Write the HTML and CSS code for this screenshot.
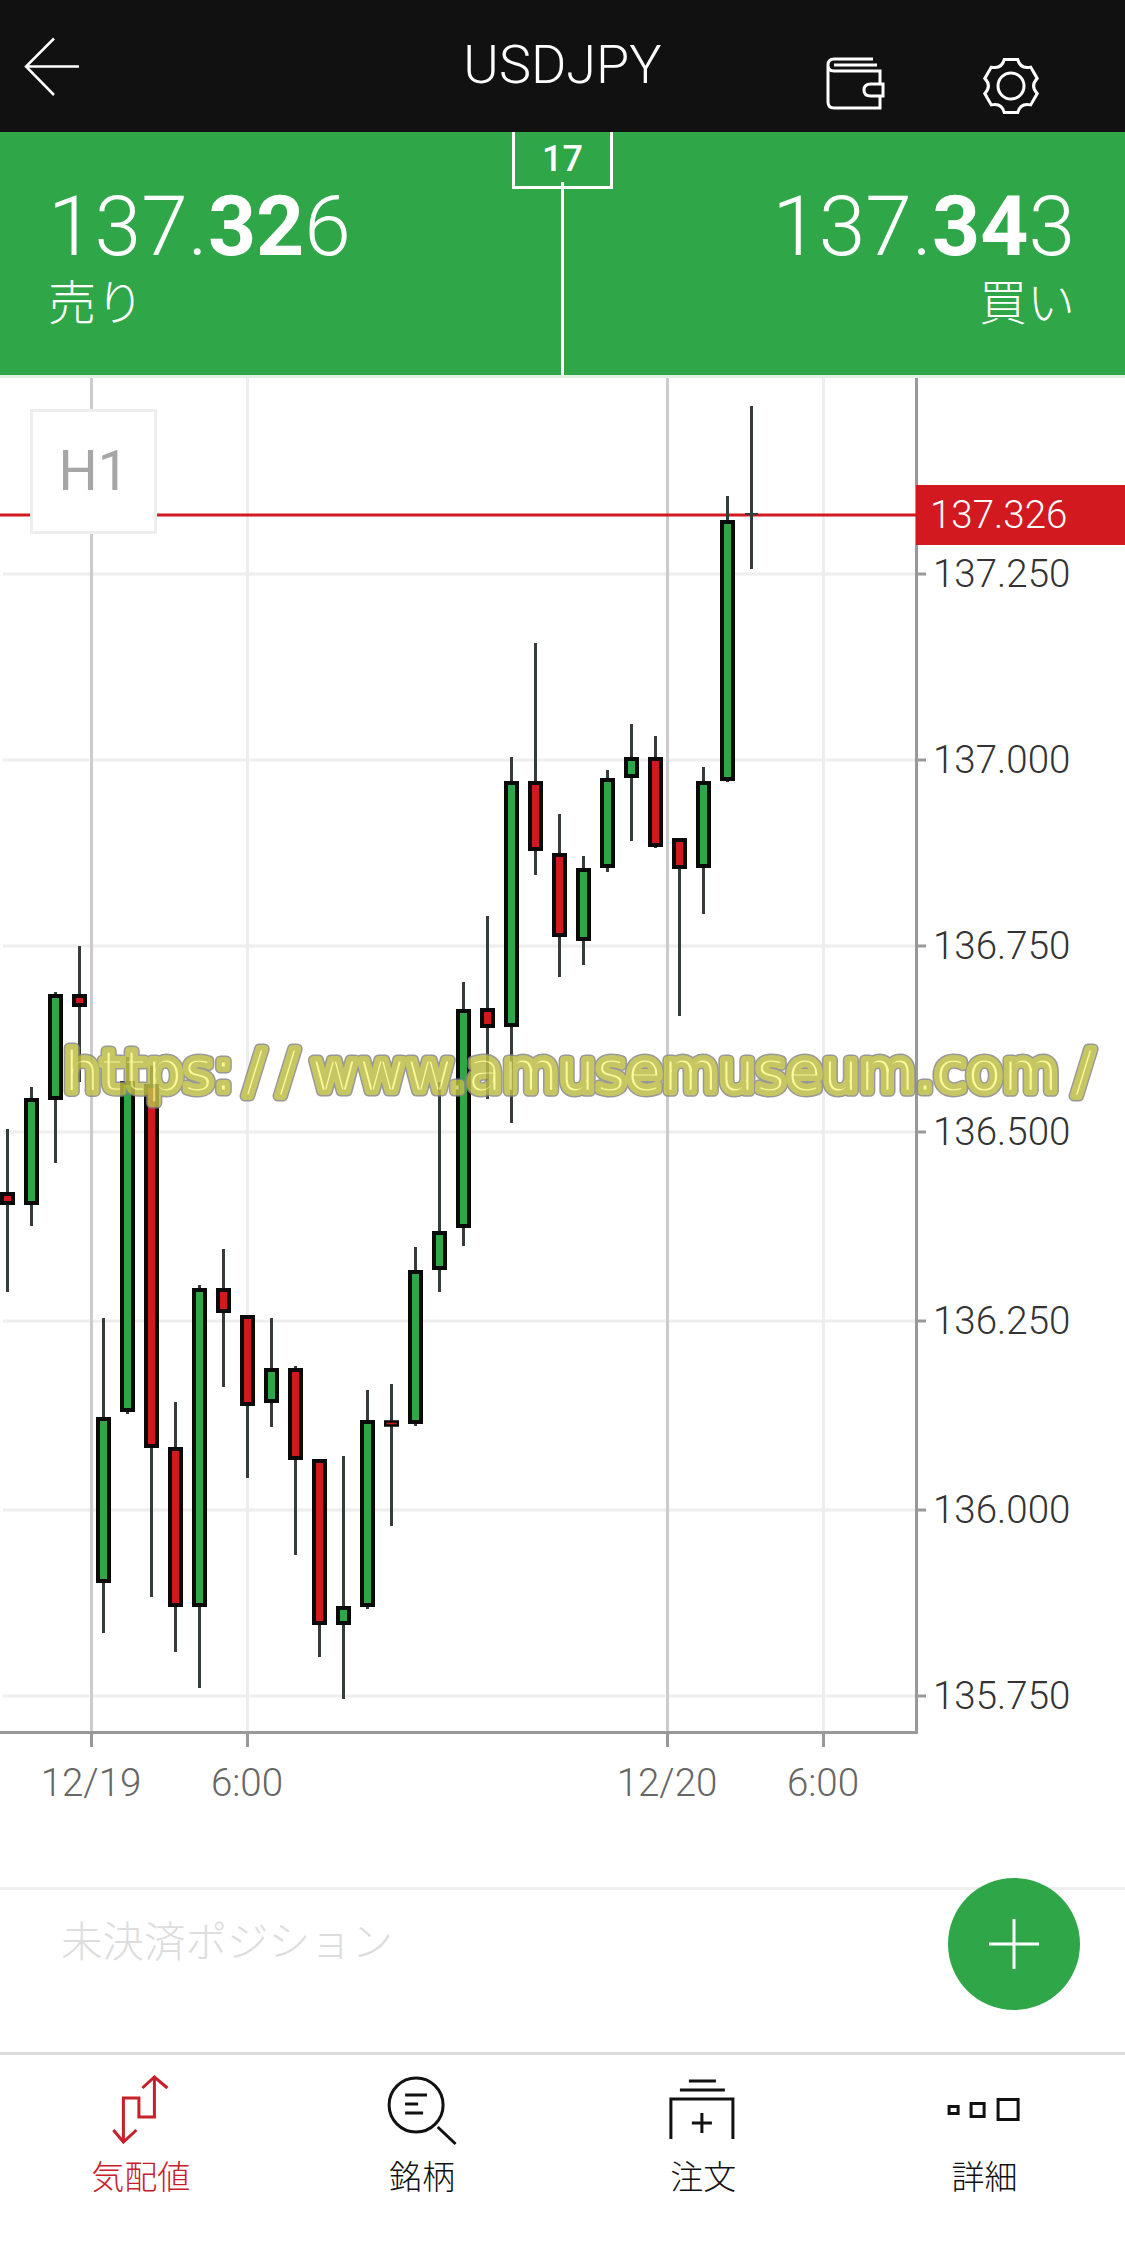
FILE: index.html
```html
<!DOCTYPE html>
<html lang="ja">
  <head>
    <meta charset="UTF-8" />
    <meta name="viewport" content="width=device-width, initial-scale=1" />
    <title>USDJPY</title>
    <link rel="stylesheet" href="styles.css">
  </head>
  <body>
    <header class="topbar">
      <a href="#" class="back" aria-label="back">
        <svg class="icon-back" viewBox="0 0 60 62">
          <path d="M33 1.5 5 29.5 33 58M5 29.5H58" />
        </svg>
      </a>
      <div class="title">USDJPY</div>
      <div class="actions">
        <svg class="icon-wallet" viewBox="0 0 62 56">
          <path d="M49 4H10Q4 4 4 10V47Q4 53 10 53H56V41M56 29V16H10Q4 16 4 10M10 10H53M59 29H46.7Q40 29 40 35T46.7 41H59Z" />
        </svg>
        <svg class="icon-gear" viewBox="-30 -30 60 60">
          <path d="M-6.7-26.5H6.7Q9.5-16.5 19.7-18.9L26.2-7.6Q19 0 26.2 7.6L19.7 18.9Q9.5 16.5 6.7 26.5H-6.7Q-9.5 16.5-19.7 18.9L-26.2 7.6Q-19 0-26.2-7.6L-19.7-18.9Q-9.5-16.5-6.7-26.5Z" />
          <circle cx="0" cy="0" r="13" />
        </svg>
      </div>
    </header>

    <section class="quote">
      <div class="side">
        <div class="price">137.<b>32</b>6</div>
        <div class="side-label">売り</div>
      </div>
      <div class="side side-buy">
        <div class="price">137.<b>34</b>3</div>
        <div class="side-label">買い</div>
      </div>
      <div class="spread">17</div>
    </section>

    <section class="chart">
      <svg class="plot" viewBox="0 378 1125 1509">
        <defs>
          <text id="watermark-text" class="watermark-text" y="1090.5"><tspan x="64" class="watermark-scheme">https:</tspan><tspan x="245">/</tspan><tspan x="278">/</tspan><tspan x="311" class="watermark-host">www.amusemuseum.com</tspan><tspan x="1074">/</tspan></text>
        </defs>

        <path class="grid" d="M3 574H916M3 760H916M3 946H916M3 1132H916M3 1321H916M3 1510H916M3 1696H916M247.5 378V1732M823.5 378V1732" />
        <path class="grid-day" d="M91.5 378V1732M667.5 378V1732" />
        <path class="axis" d="M916.5 378V1732.5H0M916 574H926M916 760H926M916 946H926M916 1132H926M916 1321H926M916 1510H926M916 1696H926M91.5 1732V1747M247.5 1732V1747M667.5 1732V1747M823.5 1732V1747" />
        <path class="last-line" d="M0 515H916" />

        <path class="wick" d="M7.5 1129V1292M31.5 1087V1226M55.5 992V1163M79.5 946V1082M103.5 1318V1633M127.5 1057V1414M151.5 1066V1597M175.5 1402V1652M199.5 1285V1688M223.5 1249V1387M247.5 1315V1478M271.5 1318V1427M295.5 1366V1555M319.5 1459V1657M343.5 1456V1699M367.5 1390V1609M391.5 1384V1526M415.5 1247V1426M439.5 1082V1292M463.5 982V1246M487.5 916V1099M511.5 757V1123M535.5 643V875M559.5 814V977M583.5 856V965M607.5 770V872M631.5 724V841M655.5 736V848M679.5 838V1016M703.5 767V914M727.5 496V782M751.5 406V569" />
        <path class="doji" d="M745 514H758" />

        <rect class="down" x="2" y="1194" width="11" height="9" />
        <rect class="up" x="26" y="1100" width="11" height="103" />
        <rect class="up" x="50" y="996" width="11" height="102" />
        <rect class="down" x="74" y="996" width="11" height="9" />
        <rect class="up" x="98" y="1419" width="11" height="162" />
        <rect class="up" x="122" y="1083" width="11" height="327" />
        <rect class="down" x="146" y="1086" width="11" height="360" />
        <rect class="down" x="170" y="1449" width="11" height="156" />
        <rect class="up" x="194" y="1290" width="11" height="315" />
        <rect class="down" x="218" y="1290" width="11" height="21" />
        <rect class="down" x="242" y="1317" width="11" height="87" />
        <rect class="up" x="266" y="1370" width="11" height="31" />
        <rect class="down" x="290" y="1370" width="11" height="88" />
        <rect class="down" x="314" y="1461" width="11" height="162" />
        <rect class="up" x="338" y="1608" width="11" height="15" />
        <rect class="up" x="362" y="1422" width="11" height="183" />
        <rect class="down thin" x="385.25" y="1421.5" width="12.5" height="4" />
        <rect class="up" x="410" y="1272" width="11" height="150" />
        <rect class="up" x="434" y="1233" width="11" height="35" />
        <rect class="up" x="458" y="1011" width="11" height="215" />
        <rect class="down" x="482" y="1010" width="11" height="16" />
        <rect class="up" x="506" y="783" width="11" height="242" />
        <rect class="down" x="530" y="783" width="11" height="66" />
        <rect class="down" x="554" y="855" width="11" height="80" />
        <rect class="up" x="578" y="870" width="11" height="69" />
        <rect class="up" x="602" y="780" width="11" height="86" />
        <rect class="up" x="626" y="759" width="11" height="17" />
        <rect class="down" x="650" y="759" width="11" height="86" />
        <rect class="down" x="674" y="840" width="11" height="27" />
        <rect class="up" x="698" y="783" width="11" height="83" />
        <rect class="up" x="722" y="522" width="11" height="257" />

        <rect class="last-tag" x="916" y="485" width="209" height="60" />
        <text class="last-price" x="930" y="528">137.326</text>

        <text class="price-label" x="933" y="587">137.250</text>
        <text class="price-label" x="933" y="773">137.000</text>
        <text class="price-label" x="933" y="959">136.750</text>
        <text class="price-label" x="933" y="1145">136.500</text>
        <text class="price-label" x="933" y="1334">136.250</text>
        <text class="price-label" x="933" y="1523">136.000</text>
        <text class="price-label" x="933" y="1709">135.750</text>

        <text class="time-label" x="91" y="1796">12/19</text>
        <text class="time-label" x="247" y="1796">6:00</text>
        <text class="time-label" x="667" y="1796">12/20</text>
        <text class="time-label" x="823" y="1796">6:00</text>

        <g class="watermark">
          <use class="watermark-rim" href="#watermark-text" />
          <use class="watermark-mid" href="#watermark-text" />
          <use class="watermark-core" href="#watermark-text" />
        </g>
      </svg>

      <div class="timeframe">H1</div>
    </section>

    <section class="positions">
      <div class="positions-empty">未決済ポジション</div>
      <button class="fab" aria-label="add">
        <svg viewBox="0 0 52 52"><path d="M26 1V51M1 26H51" /></svg>
      </button>
    </section>

    <nav class="tabs">
      <a href="#" class="tab tab-active">
        <svg class="tab-icon" viewBox="0 0 90 72">
          <path d="M46.4 13 58.4 2 71.4 13M58.4 2V42H42.9V23H27.4V67M17.4 55 27.4 67 40.4 55" />
        </svg>
        <span>気配値</span>
      </a>
      <a href="#" class="tab">
        <svg class="tab-icon" viewBox="0 0 90 72">
          <circle cx="39.1" cy="30" r="27" />
          <path d="M60.7 52 78.6 69M28.1 20H50M28.1 29H41.1M28.1 38H46.1" />
        </svg>
        <span>銘柄</span>
      </a>
      <a href="#" class="tab">
        <svg class="tab-icon" viewBox="0 0 90 72">
          <path d="M30.9 6H57.9M21.9 15H66.9M12.9 64V24H74.9V64M33.9 48H53.9M43.9 38V58" />
        </svg>
        <span>注文</span>
      </a>
      <a href="#" class="tab">
        <svg class="tab-icon" viewBox="0 0 90 72">
          <rect x="10.1" y="31.5" width="9" height="7" />
          <rect x="32.1" y="28.5" width="13" height="13" />
          <rect x="59.1" y="24.5" width="20" height="20" />
        </svg>
        <span>詳細</span>
      </a>
    </nav>
  </body>
</html>
```

FILE: styles.css
```css
* {
  box-sizing: border-box;
}

html,
body {
  background-color: #fff;
  color: #111;
  font-family: Roboto, "Noto Sans CJK JP", sans-serif;
  height: 100%;
  margin: 0;
  overflow: hidden;
}

body {
  display: flex;
  flex-direction: column;
}

svg {
  display: block;
  fill: none;
}

a {
  color: inherit;
  text-decoration: none;
}

/* top bar */

.topbar {
  background-color: #111;
  color: #fff;
  display: grid;
  flex: none;
  grid-template-columns: 1fr auto 1fr;
  height: 132px;
}

.back {
  padding: 37px 0 0 21px;
}

.icon-back {
  height: 62px;
  stroke: #fff;
  stroke-width: 2.5;
  width: 60px;
}

.title {
  font-size: 54px;
  font-weight: 300;
  line-height: 130px;
}

.actions {
  display: flex;
  gap: 95px;
  justify-content: flex-end;
  padding: 55px 84px 0 0;
}

.icon-wallet {
  height: 56px;
  stroke: #fff;
  stroke-width: 3;
  width: 62px;
}

.icon-gear {
  height: 60px;
  margin-top: 1px;
  stroke: #fff;
  stroke-width: 3;
  width: 60px;
}

/* bid and ask */

.quote {
  background-color: #2fa648;
  border-bottom: 3px solid #dff0e3;
  color: #fff;
  display: flex;
  flex: none;
  height: 246px;
  justify-content: space-between;
  position: relative;
}

.quote::after {
  background-color: #fff;
  bottom: 0;
  content: "";
  left: 561px;
  position: absolute;
  top: 50px;
  width: 3px;
}

.side {
  padding: 53px 0 0 48px;
}

.side-buy {
  padding: 53px 50px 0 0;
  text-align: right;
}

.price {
  font-size: 84px;
  font-weight: 300;
  line-height: 84px;
}

.price b {
  font-weight: 700;
}

.side-label {
  font-size: 48px;
  font-weight: 300;
  line-height: 46px;
  margin-top: 12px;
}

.spread {
  border: 3px solid #fff;
  border-top: none;
  font-size: 36px;
  font-weight: 500;
  height: 57px;
  left: 512px;
  line-height: 54px;
  position: absolute;
  text-align: center;
  top: 0;
  width: 101px;
}

/* chart */

.chart {
  flex: none;
  height: 1509px;
  position: relative;
}

.plot {
  height: 1509px;
  width: 1125px;
}

.grid {
  stroke: #eee;
  stroke-width: 3;
}

.grid-day {
  stroke: #ccc;
  stroke-width: 3;
}

.axis {
  stroke: #999;
  stroke-width: 3;
}

.last-line {
  stroke: #d31920;
  stroke-width: 3;
}

.wick {
  stroke: #343c3c;
  stroke-width: 3;
}

.doji {
  stroke: #343c3c;
  stroke-width: 2;
}

.up,
.down {
  stroke: #0a0a0a;
  stroke-width: 4;
}

.down.thin {
  stroke-width: 2.5;
}

.up {
  fill: #2fa648;
}

.down {
  fill: #d31920;
}

.last-tag {
  fill: #d31920;
}

.last-price {
  fill: #fff;
  font-size: 38.5px;
  font-weight: 300;
}

.price-label {
  fill: #333;
  font-size: 38.5px;
  font-weight: 300;
}

.time-label {
  fill: #666;
  font-size: 38.5px;
  font-weight: 300;
  text-anchor: middle;
}

.timeframe {
  background-color: #fff;
  border: 3px solid #eee;
  color: #a6a6a6;
  font-size: 55px;
  height: 125px;
  left: 30px;
  line-height: 119px;
  position: absolute;
  text-align: center;
  top: 31px;
  width: 127px;
}

.watermark {
  opacity: 0.85;
}

.watermark-text {
  font-family: "DejaVu Sans", sans-serif;
  font-size: 57px;
}

.watermark-scheme {
  letter-spacing: 0.6px;
}

.watermark-host {
  letter-spacing: 0.85px;
}

.watermark-rim,
.watermark-mid {
  fill: none;
  stroke-linejoin: round;
}

.watermark-rim {
  stroke: #878787;
  stroke-width: 11;
}

.watermark-mid {
  stroke: #bdbd48;
  stroke-width: 8;
}

.watermark-core {
  fill: #f8f888;
  stroke: #bdbd48;
  stroke-width: 3;
}

/* open positions */

.positions {
  border-top: 3px solid #eee;
  flex: none;
  height: 165px;
  padding: 23px 0 0 61px;
  position: relative;
}

.positions-empty {
  color: #ddd;
  font-size: 41.5px;
  font-weight: 300;
  line-height: 60px;
}

.fab {
  background-color: #2fa648;
  border: none;
  border-radius: 50%;
  height: 132px;
  left: 948px;
  padding: 40px;
  position: absolute;
  top: -12px;
  width: 132px;
}

.fab svg {
  height: 52px;
  stroke: #fff;
  stroke-width: 3;
  width: 52px;
}

/* bottom tabs */

.tabs {
  border-top: 3px solid #ddd;
  display: grid;
  flex: 1;
  grid-template-columns: repeat(4, 1fr);
}

.tab {
  align-items: center;
  display: flex;
  flex-direction: column;
  font-size: 33px;
  font-weight: 300;
  gap: 11px;
  line-height: 40px;
  padding-top: 20px;
}

.tab-icon {
  height: 72px;
  stroke: #111;
  stroke-width: 3;
  width: 90px;
}

.tab-active {
  color: #c8202a;
}

.tab-active .tab-icon {
  stroke: #c8202a;
}
```
